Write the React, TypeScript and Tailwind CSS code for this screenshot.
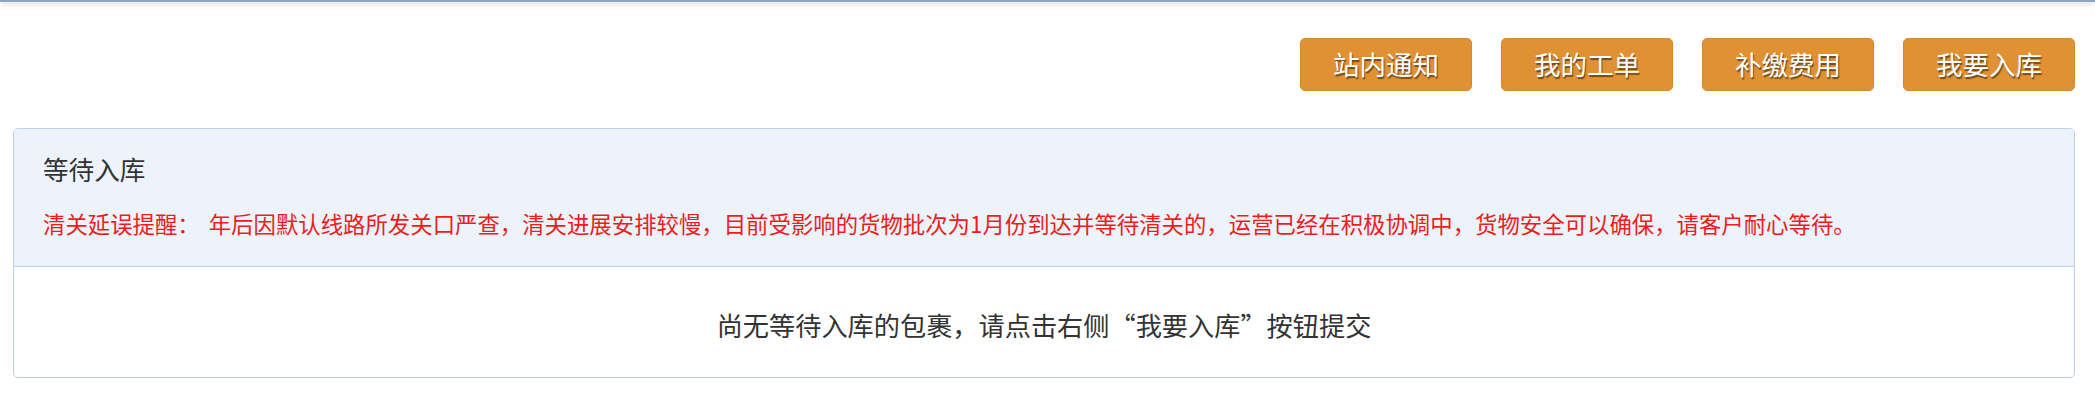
import React from "react";

const buttons = ["站内通知", "我的工单", "补缴费用", "我要入库"];

export default function App() {
  return (
    <div
      className="w-full min-h-[408px] bg-white"
      style={{ fontFamily: '"Microsoft YaHei", "Noto Sans CJK SC", "Noto Sans", sans-serif' }}
    >
      <div className="h-[2px] bg-[#8fa3c4] shadow-[0_2px_5px_rgba(80,90,110,0.35)]" />
      <div className="flex justify-end gap-[29px] pr-[20px] pt-[36px]">
        {buttons.map((b) => (
          <button
            key={b}
            className="w-[172px] h-[53px] rounded-[5px] bg-[#e09133] border border-[#d8882a] text-white text-[26.5px] leading-none flex items-center justify-center [text-shadow:1px_2px_1px_#6b4a20]"
          >
            {b}
          </button>
        ))}
      </div>
      <div className="ml-[13px] mr-[20px] mt-[37px] border border-[#bcd0ea] rounded-[5px] overflow-hidden">
        <div className="bg-[#ecf3fb] h-[138px] pl-[29px] pt-[24px] border-b border-[#bcd0ea]">
          <div className="text-[25.6px] leading-[32px] text-[#333]">等待入库</div>
          <div className="mt-[22px] text-[22.4px] leading-[32px] text-[#ee1c1c] whitespace-nowrap">
            清关延误提醒：<span className="ml-[9px]">年后因默认线路所发关口严查，清关进展安排较慢，目前受影响的货物批次为1月份到达并等待清关的，运营已经在积极协调中，货物安全可以确保，请客户耐心等待。</span>
          </div>
        </div>
        <div className="h-[110px] flex items-center justify-center pt-[6px]">
          <div className="text-[26.2px] leading-[32px] text-[#333]">
            尚无等待入库的包裹，请点击右侧“我要入库”按钮提交
          </div>
        </div>
      </div>
    </div>
  );
}
